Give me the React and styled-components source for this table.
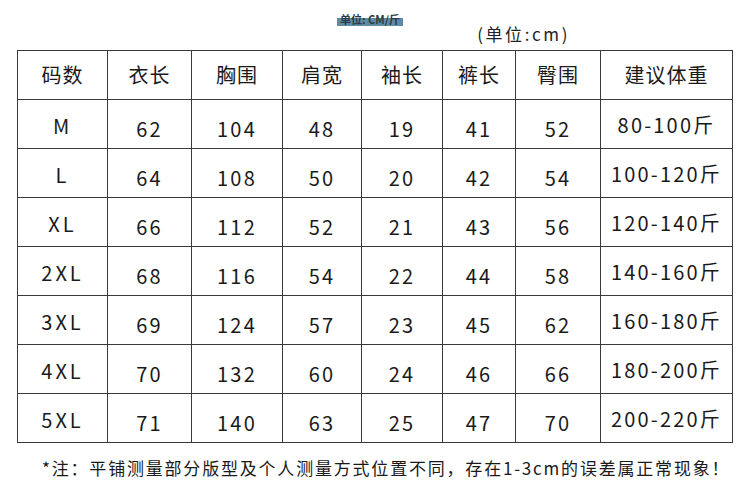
import React from "react"
import styled, { createGlobalStyle } from "styled-components"

const GlobalStyle = createGlobalStyle`
  html, body {
    margin: 0;
    padding: 0;
    background: #ffffff;
  }
  body {
    font-family: "Noto Sans CJK SC", "Noto Sans", sans-serif;
    color: #1a1a1a;
  }
`

const columns = [90, 84, 91, 79, 81, 73, 85, 132]
const headers = ["码数", "衣长", "胸围", "肩宽", "袖长", "裤长", "臀围", "建议体重"]
const rows = [
  ["M", "62", "104", "48", "19", "41", "52", "80-100斤"],
  ["L", "64", "108", "50", "20", "42", "54", "100-120斤"],
  ["XL", "66", "112", "52", "21", "43", "56", "120-140斤"],
  ["2XL", "68", "116", "54", "22", "44", "58", "140-160斤"],
  ["3XL", "69", "124", "57", "23", "45", "62", "160-180斤"],
  ["4XL", "70", "132", "60", "24", "46", "66", "180-200斤"],
  ["5XL", "71", "140", "63", "25", "47", "70", "200-220斤"],
]

const Page = styled.div`
  width: 750px;
  height: 497px;
  display: flex;
  flex-direction: column;
  overflow: hidden;
`

const Top = styled.div`
  height: 50px;
  display: flex;
  flex-direction: column;
`

const Tag = styled.div`
  margin: 13px 0 0 337px;
  width: 66px;
  height: 13px;
  font-size: 11px;
  line-height: 13px;
  font-weight: 700;
  color: #2b3a44;
  white-space: nowrap;
  text-align: center;
  background: linear-gradient(to bottom, transparent 42%, #5d8ba4 42%);
`

const Unit = styled.div`
  align-self: flex-end;
  margin: -1px 180px 0 0;
  font-size: 17px;
  line-height: 18px;
  letter-spacing: 2.6px;
  color: #222;
`

const Table = styled.table`
  margin-left: 17px;
  width: 716px;
  border-collapse: collapse;
  table-layout: fixed;
`

const Row = styled.tr`
  height: 49px;
`

const Head = styled.th`
  border: 1px solid #3a3a3a;
  font-weight: 400;
  font-size: 20px;
  letter-spacing: 1px;
  padding: 0 0 2px 0;
  color: #1a1a1a;
  text-align: center;
  vertical-align: middle;
`

const Cell = styled.td`
  border: 1px solid #3a3a3a;
  font-size: 20px;
  letter-spacing: ${p => (p.$kind === "size" ? "3px" : "2.2px")};
  text-align: center;
  vertical-align: middle;
  white-space: nowrap;
  color: #1a1a1a;
  padding: ${p =>
    p.$kind === "size" ? "2px 0 0 0" : p.$kind === "weight" ? "1px 0 0 0" : "9px 0 0 0"};
`

const Note = styled.div`
  margin: 14px 0 0 42px;
  font-size: 17px;
  line-height: 22px;
  letter-spacing: 1.8px;
  color: #1a1a1a;
  white-space: nowrap;
`

const kindOf = i => (i === 0 ? "size" : i === 7 ? "weight" : "num")

export default function App() {
  return (
    <Page>
      <GlobalStyle />
      <Top>
        <Tag>单位: CM/斤</Tag>
        <Unit>(单位:cm)</Unit>
      </Top>
      <Table>
        <colgroup>
          {columns.map((w, i) => (
            <col key={i} style={{ width: w }} />
          ))}
        </colgroup>
        <thead>
          <Row>
            {headers.map(h => (
              <Head key={h}>{h}</Head>
            ))}
          </Row>
        </thead>
        <tbody>
          {rows.map(r => (
            <Row key={r[0]}>
              {r.map((v, i) => (
                <Cell key={i} $kind={kindOf(i)}>
                  {v}
                </Cell>
              ))}
            </Row>
          ))}
        </tbody>
      </Table>
      <Note>*注：平铺测量部分版型及个人测量方式位置不同，存在1-3cm的误差属正常现象！</Note>
    </Page>
  )
}
